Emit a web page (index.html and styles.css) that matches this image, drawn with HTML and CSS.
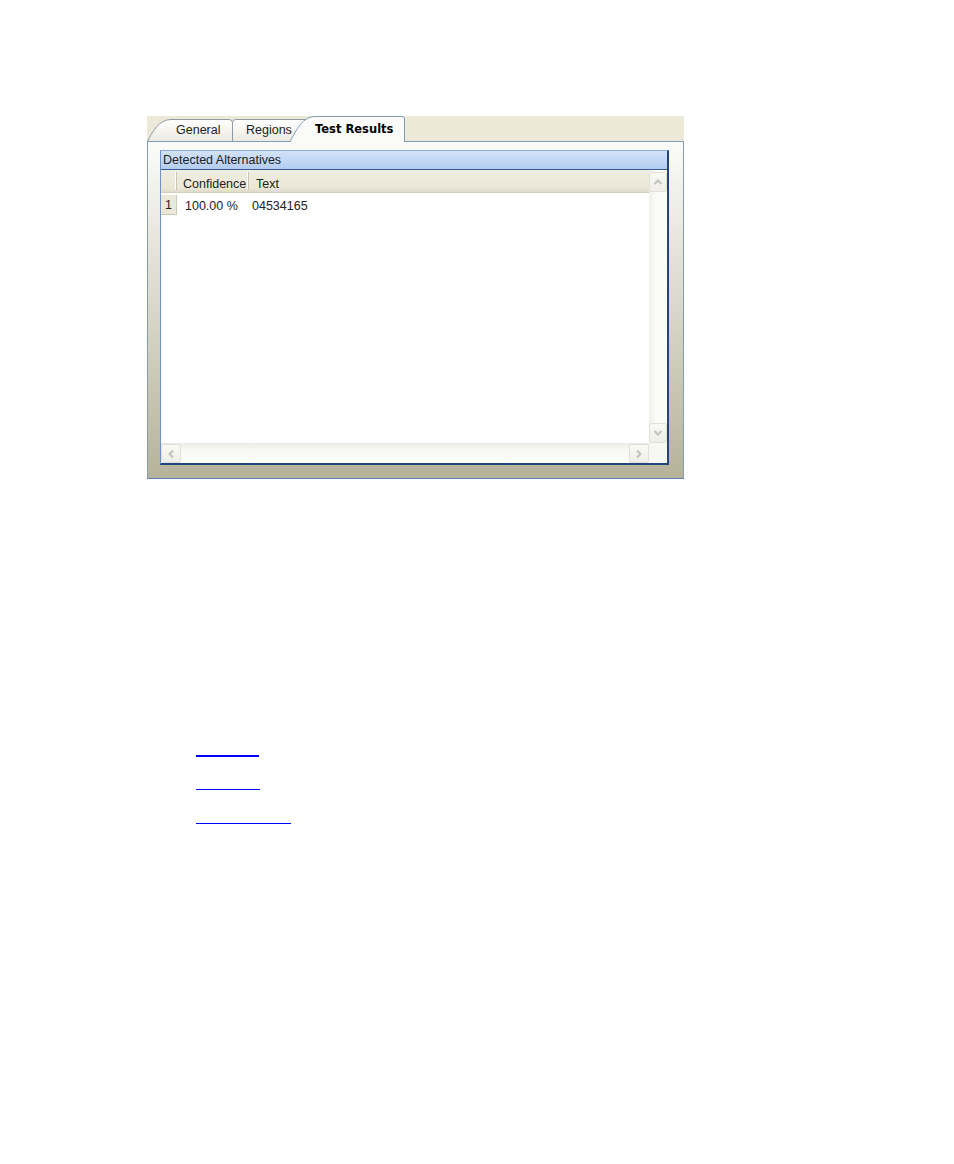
FILE: index.html
```html
<!DOCTYPE html>
<html>
<head>
<meta charset="utf-8">
<link rel="stylesheet" href="styles.css">
</head>
<body>
<div class="page">
  <div class="dialog">
    <svg class="tabs" width="537" height="26" viewBox="0 0 537 26">
      <defs>
        <linearGradient id="tabg" x1="0" y1="0" x2="0" y2="1">
          <stop offset="0" stop-color="#ffffff"/>
          <stop offset="1" stop-color="#ebe9e0"/>
        </linearGradient>
      </defs>
      <rect x="0" y="0" width="537" height="26" fill="#ece9d8"/>
      <path d="M85.5,25.5 L85.5,6.5 Q85.5,3.5 89,3.5 L172,3.5 L172,25.5 Z" fill="url(#tabg)" stroke="#919ba6" stroke-width="1"/>
      <path d="M0.5,25.5 C5,16 12,3.5 24,3.5 L82,3.5 Q85.5,3.5 85.5,7 L85.5,25.5 Z" fill="url(#tabg)" stroke="#919ba6" stroke-width="1"/>
      <line x1="0" y1="25.5" x2="536.5" y2="25.5" stroke="#7f9db9" stroke-width="1"/>
      <line x1="536.5" y1="25.5" x2="536.5" y2="26" stroke="#7f9db9" stroke-width="1"/>
      <path d="M143,26 C149,14 156,0.5 168,0.5 L255,0.5 Q257.5,0.5 257.5,3 L257.5,26" fill="#fbfbf9" stroke="#7f9db9" stroke-width="1"/>
      <text class="tablabel" x="29" y="17.5">General</text>
      <text class="tablabel" x="99" y="17.5">Regions</text>
      <text class="tablabel sel" x="168" y="17">Test Results</text>
    </svg>
    <div class="panel">
      <div class="group">
        <div class="group-head">Detected Alternatives</div>
        <div class="grid">
          <div class="grid-main">
            <div class="table">
              <div class="hrow">
                <div class="c-ind"></div>
                <div class="c-conf">Confidence</div>
                <div class="c-text">Text</div>
              </div>
              <div class="drow">
                <div class="c-ind">1</div>
                <div class="c-conf">100.00 %</div>
                <div class="c-text">04534165</div>
              </div>
            </div>
            <div class="vscroll">
              <div class="sbtn"><svg width="10" height="8" viewBox="0 0 10 8"><polyline points="1.5,6 5,2.5 8.5,6" fill="none" stroke="#c3c2b8" stroke-width="2"/></svg></div>
              <div class="vtrack"></div>
              <div class="sbtn"><svg width="10" height="8" viewBox="0 0 10 8"><polyline points="1.5,2 5,5.5 8.5,2" fill="none" stroke="#c3c2b8" stroke-width="2"/></svg></div>
            </div>
          </div>
          <div class="hbar">
            <div class="hscroll">
              <div class="hbtn"><svg width="8" height="10" viewBox="0 0 8 10"><polyline points="6,1.5 2.5,5 6,8.5" fill="none" stroke="#c3c2b8" stroke-width="2"/></svg></div>
              <div class="htrack"></div>
              <div class="hbtn"><svg width="8" height="10" viewBox="0 0 8 10"><polyline points="2,1.5 5.5,5 2,8.5" fill="none" stroke="#c3c2b8" stroke-width="2"/></svg></div>
            </div>
            <div class="corner"></div>
          </div>
        </div>
      </div>
    </div>
  </div>
  <ul class="links">
    <li><a class="link l1" href="#"></a></li>
    <li><a class="link l2" href="#"></a></li>
    <li><a class="link l3" href="#"></a></li>
  </ul>
</div>
</body>
</html>
```
FILE: styles.css
```css
html, body {
  margin: 0;
  padding: 0;
  background: #ffffff;
}
body {
  font-family: "Liberation Sans", Arial, sans-serif;
  font-size: 12.5px;
  color: #000;
}
.page {
  padding: 116px 0 0 147px;
}
.dialog {
  width: 537px;
}
.tabs {
  display: block;
}
.tablabel {
  font-family: "Liberation Sans", Arial, sans-serif;
  font-size: 12.5px;
  fill: #222222;
}
.tablabel.sel {
  font-family: "DejaVu Sans", sans-serif;
  font-weight: bold;
  font-size: 11.5px;
  fill: #000;
}
.panel {
  box-sizing: border-box;
  width: 537px;
  border-left: 1px solid #7f9db9;
  border-right: 1px solid #7f9db9;
  border-bottom: 1px solid #5b80b8;
  background: linear-gradient(#fbfbf9 0%, #b6b39a 100%);
  padding: 8px 14px 13px 12px;
}
.group {
  width: 509px;
  box-sizing: border-box;
  border-left: 1px solid #6f93c8;
  border-top: 1px solid #8eaed8;
  border-right: 2px solid #24437f;
  border-bottom: 2px solid #24437f;
}
.group-head {
  height: 18px;
  line-height: 18px;
  padding-left: 2px;
  background: linear-gradient(#d3e3f8, #b2cdf0);
  border-bottom: 1px solid #3b5b98;
  color: #222;
}
.grid {
  background: #ffffff;
}
.grid-main {
  display: flex;
  height: 273px;
}
.table {
  width: 488px;
}
.hrow {
  display: flex;
  height: 23px;
  box-sizing: border-box;
  background: linear-gradient(#efede1, #ebe8d8 80%, #dedbc9);
  border-bottom: 1px solid #d2cfbd;
}
.hrow > div {
  box-sizing: border-box;
  line-height: 16px;
  border-right: 1px solid #c8c5b3;
  box-shadow: inset -1px 0 0 #ffffff;
  margin: 2px 0 2px;
  padding-top: 4px;
  color: #222;
}
.hrow .c-text {
  border-right: none;
  box-shadow: none;
}
.c-ind {
  width: 16px;
  flex: none;
}
.c-conf {
  width: 72px;
  flex: none;
}
.c-text {
  flex: 1;
}
.hrow .c-conf {
  padding-left: 6px;
}
.hrow .c-text {
  padding-left: 7px;
}
.drow {
  display: flex;
  height: 20px;
  margin-top: 2px;
  line-height: 22px;
  color: #222;
}
.drow .c-ind {
  background: #ebe8d8;
  border-right: 1px solid #cbc8b6;
  border-bottom: 1px solid #cbc8b6;
  box-sizing: border-box;
  text-align: center;
  line-height: 21px;
}
.drow .c-conf {
  padding-left: 8px;
  box-sizing: border-box;
}
.drow .c-text {
  padding-left: 3px;
}
.vscroll {
  width: 18px;
  display: flex;
  flex-direction: column;
  background: linear-gradient(90deg, #f1f0ea, #fbfbf8 40%, #fdfdfb);
}
.sbtn, .hbtn {
  box-sizing: border-box;
  display: flex;
  align-items: center;
  justify-content: center;
  background: linear-gradient(#f9f9f6, #efeee8);
  border: 1px solid #e1e0d8;
  border-radius: 2px;
}
.sbtn {
  height: 20px;
  margin-top: 2px;
}
.sbtn:last-child {
  margin-top: 0;
  margin-bottom: 0;
}
.vtrack {
  flex: 1;
}
.hbar {
  display: flex;
  height: 20px;
}
.hscroll {
  width: 488px;
  display: flex;
  background: linear-gradient(#efeee8, #f8f8f4 30%, #fdfdfb);
  border-top: 1px solid #ebeae3;
  box-sizing: border-box;
}
.hbtn {
  width: 20px;
}
.htrack {
  flex: 1;
}
.corner {
  width: 18px;
  background: #f7f7f3;
}
.links {
  list-style: none;
  margin: 276px 0 0 49px;
  padding: 0;
}
.links li {
  height: 34px;
}
.link {
  display: block;
  height: 0;
  border-bottom: 2px solid #0000ff;
}
.l1 { width: 63px; }
.l2 { width: 64px; border-bottom-width: 1.5px; }
.l3 { width: 95px; border-bottom-width: 1.5px; }
```
